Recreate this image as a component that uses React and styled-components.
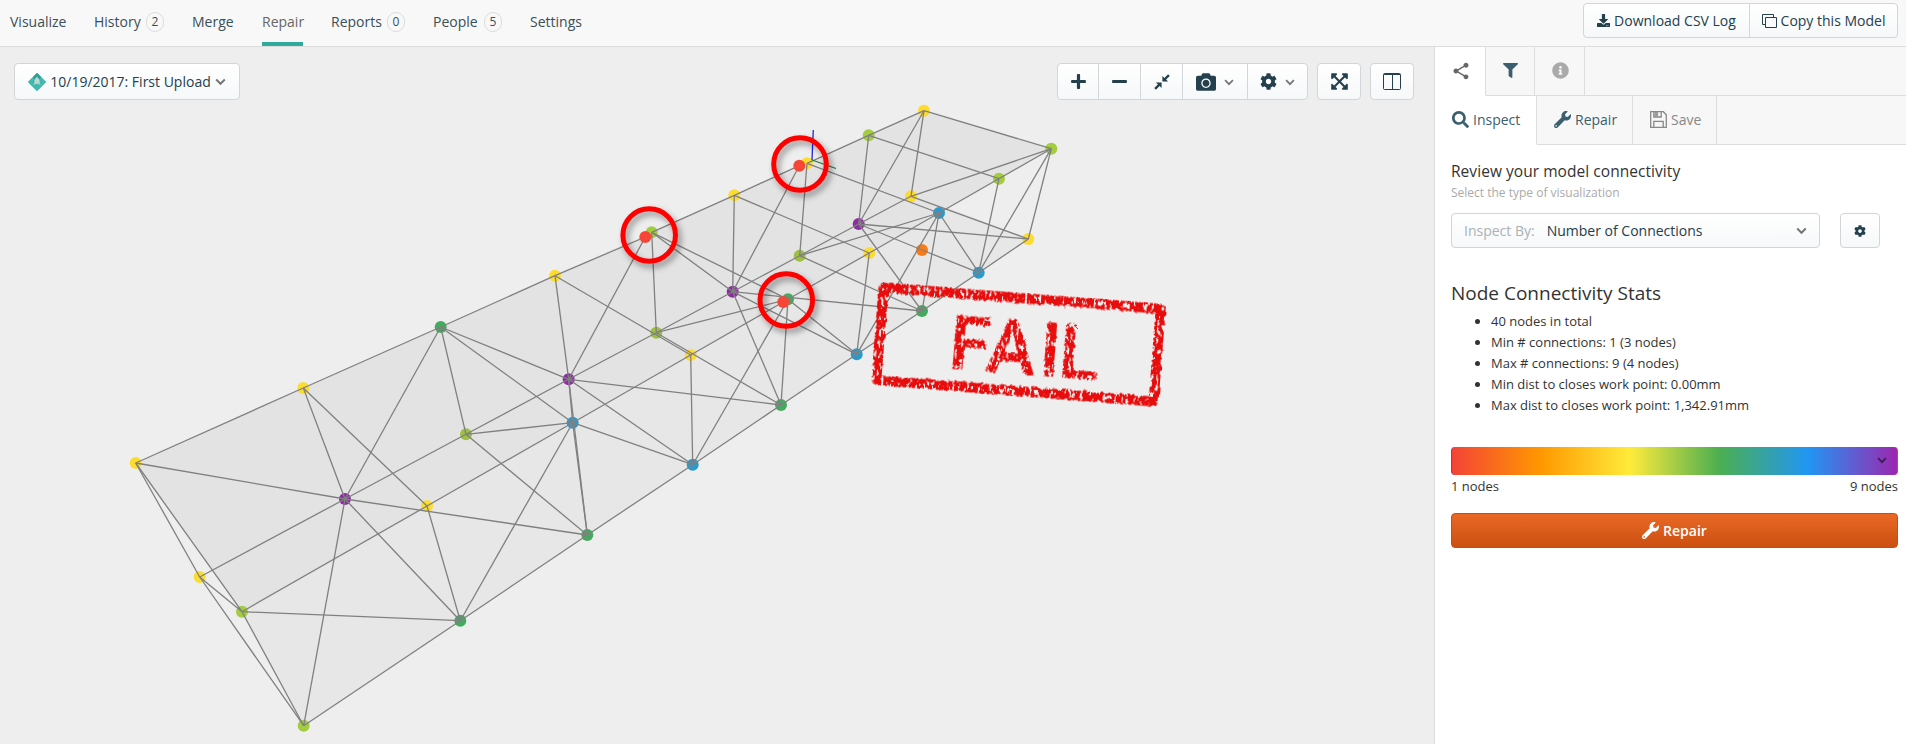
import React from "react";
import styled, { createGlobalStyle } from "styled-components";
import { FaDownload, FaFilter, FaInfoCircle, FaSearch, FaWrench, FaPlus, FaMinus, FaCamera, FaCog, FaExpandArrowsAlt } from "react-icons/fa";
import { MdShare } from "react-icons/md";

const Global = createGlobalStyle`
  * { box-sizing: border-box; }
  html, body { margin: 0; padding: 0; overflow: hidden; }
  body { font-family: "Open Sans", "Noto Sans", sans-serif; font-size: 14px; color: #333; background: #eee; }
  svg { display: block; flex: none; }
`;

const Page = styled.div`
  width: 1906px;
  height: 744px;
  display: flex;
  flex-direction: column;
`;

const Header = styled.header`
  height: 47px;
  flex: none;
  display: flex;
  justify-content: space-between;
  padding: 0 8px 0 10px;
  background: #f8f8f8;
  border-bottom: 1px solid #ddd;
`;

const Nav = styled.nav`
  display: flex;
  gap: 28px;
`;

const NavItem = styled.a`
  width: ${(p) => p.$w}px;
  display: flex;
  align-items: center;
  justify-content: space-between;
  padding-top: ${(p) => (p.$active ? 1 : 0)}px;
  padding-bottom: ${(p) => (p.$active ? 0 : 3)}px;
  border-bottom: ${(p) => (p.$active ? "4px solid #30aa9d" : "0")};
  color: ${(p) => (p.$active ? "#666" : "#3a4f58")};
  letter-spacing: ${(p) => p.$ls || 0}px;
  white-space: nowrap;
`;

const Count = styled.span`
  width: 18px;
  height: 20px;
  border: 1px solid #ddd;
  border-radius: 10px;
  display: flex;
  align-items: center;
  justify-content: center;
  font-size: 12px;
  letter-spacing: 0;
`;

const Actions = styled.div`
  display: flex;
  padding-top: 3px;
`;

const Button = styled.button`
  width: ${(p) => p.$w}px;
  height: ${(p) => p.$h || 35}px;
  display: flex;
  align-items: center;
  justify-content: ${(p) => p.$justify || "center"};
  gap: ${(p) => p.$gap || 4}px;
  padding: ${(p) => p.$pad || "0"};
  font: inherit;
  color: #24404c;
  white-space: nowrap;
  background: linear-gradient(#fff, #f6f8f9);
  border: 1px solid #d0d6da;
  border-radius: 4px;
  letter-spacing: ${(p) => p.$ls || 0}px;
`;

const Group = styled.div`
  display: flex;
  & > button { border-radius: 0; }
  & > button + button { margin-left: -1px; }
  & > button:first-child { border-radius: 4px 0 0 4px; }
  & > button:last-child { border-radius: 0 4px 4px 0; }
`;

const Body = styled.main`
  flex: 1;
  display: flex;
  min-height: 0;
`;

const Viewer = styled.section`
  width: 1434px;
  position: relative;
  background: #eee;
`;

const Scene = styled.svg`
  position: absolute;
  left: 0;
  top: 0;
`;

const ViewerBar = styled.div`
  position: relative;
  display: flex;
  justify-content: space-between;
  padding: 16px 20px 0 14px;
`;

const Tools = styled.div`
  display: flex;
  gap: 9px;
`;

const Sidebar = styled.aside`
  flex: 1;
  background: #fff;
  border-left: 1px solid #ddd;
`;

const Tabs = styled.div`
  display: flex;
  height: 49px;
  background: #f7f7f7;
`;

const Tab = styled.div`
  width: ${(p) => p.$w}px;
  display: flex;
  align-items: center;
  padding-left: ${(p) => p.$pl}px;
  padding-bottom: 1px;
  gap: 4px;
  color: ${(p) => p.$color};
  background: ${(p) => (p.$active ? "#fff" : "#f7f7f7")};
  border-right: 1px solid #ddd;
  border-bottom: 1px solid ${(p) => (p.$active ? "#fff" : "#ddd")};
`;

const TabFill = styled.div`
  flex: 1;
  border-bottom: 1px solid #ddd;
`;

const Panel = styled.div`
  padding: 0 8px 0 16px;
`;

const Title = styled.h2`
  margin: 14px 0 0;
  font-size: 15.5px;
  font-weight: 400;
  line-height: 24px;
  letter-spacing: 0.05px;
`;

const Hint = styled.p`
  margin: 0;
  font-size: 12px;
  line-height: 20px;
  color: #aaa;
`;

const Row = styled.div`
  display: flex;
  gap: 20px;
  margin-top: 10px;
`;

const Muted = styled.span`
  color: #aab2b6;
  margin-right: 8px;
`;

const Grow = styled.span`
  flex: 1;
  text-align: left;
  font-weight: 500;
`;

const StatsTitle = styled.h1`
  margin: 31px 0 0;
  font-size: 19px;
  font-weight: 500;
  line-height: 28px;
  color: #333;
`;

const Stats = styled.ul`
  margin: 4px 0 0;
  padding-left: 40px;
  font-size: 13px;
  line-height: 21px;
`;

const Scale = styled.div`
  height: 28px;
  margin-top: 31px;
  border-radius: 4px;
  background: linear-gradient(90deg, #f44336, #ff9800 20%, #ffeb3b 40%, #4caf50 60%, #2196f3 80%, #9c27b0);
  border-left: 1px solid #a12ba8;
  border-right: 1px solid #e33a55;
  display: flex;
  align-items: center;
  justify-content: flex-end;
  padding: 0 10px 2px 0;
  color: #3c1c55;
`;

const ScaleLabels = styled.div`
  display: flex;
  justify-content: space-between;
  font-size: 13px;
  line-height: 22px;
`;

const RepairButton = styled.button`
  width: 100%;
  height: 35px;
  margin-top: 16px;
  display: flex;
  align-items: center;
  justify-content: center;
  gap: 4px;
  font: inherit;
  font-weight: 600;
  color: #fff;
  background: linear-gradient(#e96826, #cc5011);
  border: 1px solid #c04f18;
  border-radius: 4px;
`;

const Chevron = ({ color = "#777", size = 11 }) => (
  <svg width={size} height={size} viewBox="0 0 11 11" fill="none" stroke={color} strokeWidth="2"><path d="M1.2 3.5 5.5 7.8 9.8 3.5" /></svg>
);

const Copy = () => (
  <svg width="15" height="14" viewBox="0 0 15 14" fill="none" stroke="#24404c"><path d="M3.5 10.5h-3v-10h11v3" /><path d="M3.5 3.5h11v10h-11z" /></svg>
);

const Gem = () => (
  <svg width="18" height="18" viewBox="0 0 18 18">
    <path d="M9 0.3 17.7 9 9 17.7 0.3 9z" fill="#3fb9ad" stroke="#3fb9ad" strokeLinejoin="round" />
    <path d="M9 0 13 4 9 9 5 4z" fill="#329d93" />
    <path d="M9 3.5 6.5 7v2.2l-1 3 3-2 .6 1.8.6-1.8 3 2-1.2-3V7z" fill="#c3d6d4" />
  </svg>
);

const Shrink = () => (
  <svg width="16" height="16" viewBox="0 0 16 16" fill="#24404c">
    <path d="M8.4 1.9v5.7h5.7l-2-2 3.7-3.7L14.1.2l-3.7 3.7z" /><path d="M7.6 14.1V8.4H1.9l2 2L.2 14.1l1.7 1.7 3.7-3.7z" />
  </svg>
);

const Columns = () => (
  <svg width="18" height="17" viewBox="0 0 18 17" fill="none" stroke="#24404c"><rect x=".5" y=".5" width="17" height="16" rx="1" /><path d="M1 1.5h16M9.5 2v14" /></svg>
);

const Floppy = () => (
  <svg width="17" height="17" viewBox="0 0 17 17" fill="none" stroke="#888" strokeWidth="1.3"><path d="M.7.7h12.6l3 3v12.6H.7z" /><path d="M3.8 16v-5.6h9.4V16M3.8 1v5h7.4V1" /><path d="M4.5 1h3.6v4.5H4.5z" fill="#999" stroke="none" /></svg>
);

const YELLOW = "#fddc2e", LIME = "#a3cc3e", OLIVE = "#9dbf43", GREEN = "#43aa5e", BLUE = "#2c99cd", PURPLE = "#8e2ba3", RED = "#f64638", ORANGE = "#f97c18";

const nodes = {
  a: [135.7, 463, YELLOW], b: [303.3, 388, YELLOW], c: [345, 499, PURPLE], d: [427, 506, YELLOW],
  e: [199.7, 577, YELLOW], f: [242, 611.7, LIME], g: [460.3, 620.7, GREEN], h: [303.7, 725.7, LIME],
  i: [466, 434.3, OLIVE], j: [440.7, 327, GREEN], k: [555, 275.7, YELLOW], m: [651.7, 232.3, LIME],
  n: [656.3, 332.7, OLIVE], o: [568.7, 379.3, PURPLE], p: [572.7, 422.7, BLUE], q: [690.7, 355, YELLOW],
  r: [692.7, 464.7, BLUE], s: [587.3, 535, GREEN], t: [781, 405, GREEN], u: [732.7, 291.7, PURPLE],
  v: [799.7, 255.7, OLIVE], w: [788, 299.3, GREEN], A: [734.3, 195.3, YELLOW], C: [807, 163.3, YELLOW],
  D: [868.7, 135.3, LIME], E: [924, 110.7, YELLOW], F: [1051.3, 148.7, LIME], G: [999, 178.7, LIME],
  H: [911, 196.3, YELLOW], I: [939, 213, BLUE], J: [858.7, 224, PURPLE], K: [1028.3, 239, YELLOW],
  L: [922, 250, ORANGE], M: [869.3, 253, YELLOW], N: [978.7, 272.7, BLUE], O: [922, 311, GREEN],
  P: [856.7, 354.3, BLUE], l: [645.3, 237, RED], x: [783.3, 302, RED], B: [799.3, 165.7, RED],
};
const overlays = ["l", "x", "B"];

const edges = (
  "ab bj jk kl mA AB CD DE EF ac cs ae af ef eh fh ec fd fg hg hc cg ci cj bc bd dg dp gp gs " +
  "ij io ip is jo jp ok ol on op os ot or pq pr ps kq nm nt mu mw nu nw qw qr rs rt rw tw tu tP uA uB uv uO uP wP wM " +
  "Cv AM MP MI vJ vI vO CI JD JE JH HF JK JL LN JO HE HK IF IN IO IP DG GN NF NK NO FK OP"
).split(" ");

const points = (keys) => keys.split("").map((k) => `${nodes[k][0]},${nodes[k][1]}`).join(" ");
const rings = [[649.2, 235], [800, 164], [786.3, 300]];

const Truss = () => (
  <Scene width="1434" height="697" viewBox="0 47 1434 697">
    <defs>
      <filter id="ringShadow" x="-30%" y="-30%" width="170%" height="170%">
        <feDropShadow dx="3" dy="4" stdDeviation="3" floodColor="#000" floodOpacity="0.4" />
      </filter>
      <filter id="ink" x="-5%" y="-5%" width="110%" height="110%">
        <feTurbulence type="fractalNoise" baseFrequency="0.35 0.16" numOctaves="3" seed="8" result="grain" />
        <feColorMatrix in="grain" type="matrix" values="0 0 0 0 0  0 0 0 0 0  0 0 0 0 0  14 0 0 0 -8" result="holes" />
        <feDisplacementMap in="SourceGraphic" in2="grain" scale="5" xChannelSelector="R" yChannelSelector="G" result="rough" />
        <feComposite in="rough" in2="holes" operator="out" />
      </filter>
    </defs>
    <polygon points={points("afhgsrtPONKFE")} fill="#e7e7e7" />
    <polygon points={points("afdpqwMIGFE")} fill="#e3e3e3" />
    <polygon points={`${points("FKI")}`} fill="#eee" />
    <polygon points={`939,213 948,207.7 1028.3,239 978.7,272.7`} fill="#e7e7e7" />
    {Object.entries(nodes).filter(([k]) => !overlays.includes(k)).map(([k, [x, y, c]]) => <circle key={k} cx={x} cy={y} r="6" fill={c} />)}
    <g stroke="#808080" strokeWidth="1.3">
      {edges.map((e) => <line key={e} x1={nodes[e[0]][0]} y1={nodes[e[0]][1]} x2={nodes[e[1]][0]} y2={nodes[e[1]][1]} />)}
    </g>
    {overlays.map((k) => <circle key={k} cx={nodes[k][0]} cy={nodes[k][1]} r="6" fill={nodes[k][2]} />)}
    <path d="M813.3 130 812 160" stroke="#2424e0" strokeWidth="1.3" />
    <path d="M812 160 836 168.5" stroke="#1e7a28" strokeWidth="1.2" />
    {rings.map(([x, y]) => <circle key={x} cx={x} cy={y} r="26.3" fill="none" stroke="#f00" strokeWidth="5" filter="url(#ringShadow)" />)}
    <g transform="translate(1018.5 344.5) rotate(4.4)" filter="url(#ink)">
      <rect x="-139" y="-46.5" width="278" height="93" rx="1" fill="none" stroke="#e80c0c" strokeWidth="10" />
      <text x="-69 -31.5 21.5 41" y="29" fontFamily="Roboto, sans-serif" fontWeight="500" fontSize="74" fill="#e80c0c" stroke="#e80c0c" strokeWidth="0.8" strokeLinejoin="round">FAIL</text>
    </g>
  </Scene>
);

const navItems = [
  { label: "Visualize", w: 56 }, { label: "History", w: 70, count: 2 }, { label: "Merge", w: 42 },
  { label: "Repair", w: 41, active: true }, { label: "Reports", w: 74, count: 0 },
  { label: "People", w: 69, count: 5 }, { label: "Settings", w: 52 },
];

export default function App() {
  return (
    <Page>
      <Global />
      <Header>
        <Nav>
          {navItems.map((n) => (
            <NavItem key={n.label} $w={n.w} $active={n.active}>
              {n.label}
              {n.count !== undefined && <Count>{n.count}</Count>}
            </NavItem>
          ))}
        </Nav>
        <Actions>
          <Group>
            <Button $w={167}><FaDownload size={13} />Download CSV Log</Button>
            <Button $w={149}><Copy />Copy this Model</Button>
          </Group>
        </Actions>
      </Header>
      <Body>
        <Viewer>
          <Truss />
          <ViewerBar>
            <Button $w={226} $h={37}><Gem />10/19/2017: First Upload<Chevron /></Button>
            <Tools>
              <Group>
                <Button $w={42} $h={37}><FaPlus size={17} /></Button>
                <Button $w={43} $h={37}><FaMinus size={17} /></Button>
                <Button $w={43} $h={37}><Shrink /></Button>
                <Button $w={66} $h={37} $gap={8}><FaCamera size={20} /><Chevron size={10} /></Button>
                <Button $w={61} $h={37} $gap={8}><FaCog size={17} /><Chevron size={10} /></Button>
              </Group>
              <Button $w={44} $h={37}><FaExpandArrowsAlt size={19} /></Button>
              <Button $w={44} $h={37}><Columns /></Button>
            </Tools>
          </ViewerBar>
        </Viewer>
        <Sidebar>
          <Tabs>
            <Tab $w={51} $pl={16} $active $color="#666"><MdShare size={20} /></Tab>
            <Tab $w={49} $pl={17} $color="#3b5f6e"><FaFilter size={15} /></Tab>
            <Tab $w={50} $pl={17} $color="#aaa"><FaInfoCircle size={17} /></Tab>
            <TabFill />
          </Tabs>
          <Tabs>
            <Tab $w={102} $pl={17} $active $color="#3b5f6e"><FaSearch size={17} />Inspect</Tab>
            <Tab $w={96} $pl={17} $color="#3b5f6e"><FaWrench size={17} />Repair</Tab>
            <Tab $w={84} $pl={17} $color="#888"><Floppy />Save</Tab>
            <TabFill />
          </Tabs>
          <Panel>
            <Title>Review your model connectivity</Title>
            <Hint>Select the type of visualization</Hint>
            <Row>
              <Button $w={369} $pad="0 12px"><Muted>Inspect By:</Muted><Grow>Number of Connections</Grow><Chevron /></Button>
              <Button $w={40}><FaCog size={12} /></Button>
            </Row>
            <StatsTitle>Node Connectivity Stats</StatsTitle>
            <Stats>
              <li>40 nodes in total</li>
              <li>Min # connections: 1 (3 nodes)</li>
              <li>Max # connections: 9 (4 nodes)</li>
              <li>Min dist to closes work point: 0.00mm</li>
              <li>Max dist to closes work point: 1,342.91mm</li>
            </Stats>
            <Scale><Chevron color="#3c1c55" size={10} /></Scale>
            <ScaleLabels><span>1 nodes</span><span>9 nodes</span></ScaleLabels>
            <RepairButton><FaWrench size={17} />Repair</RepairButton>
          </Panel>
        </Sidebar>
      </Body>
    </Page>
  );
}
